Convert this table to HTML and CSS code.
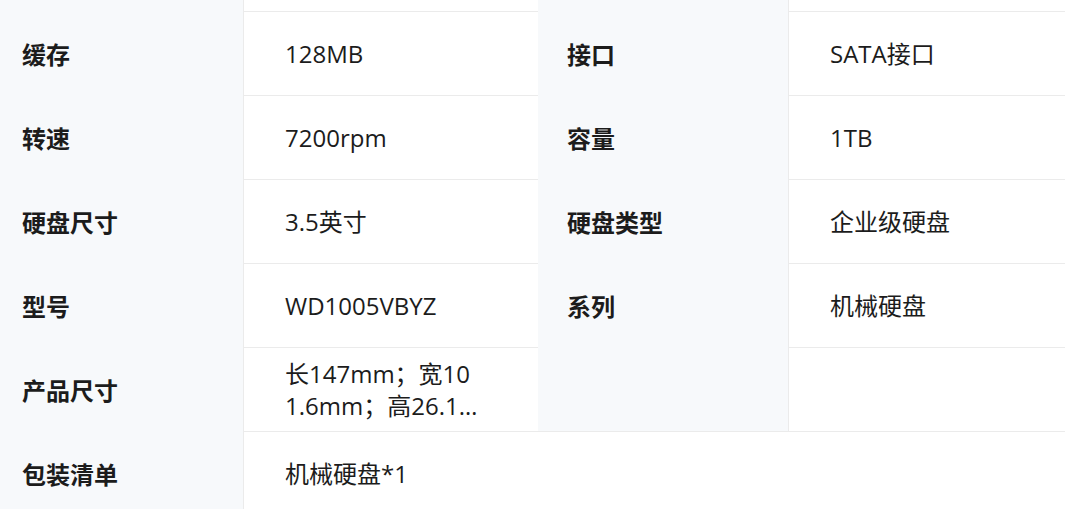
FILE: index.html
```html
<!DOCTYPE html>
<html>
<head>
    <meta charset="utf-8">
    <meta name="viewport" content="width=device-width, initial-scale=1">
    <link rel="stylesheet" href="styles.css">
</head>
<body>
    <div class="specs">
        <div class="row">
            <div class="label"></div>
            <div class="value"></div>
            <div class="label"></div>
            <div class="value"></div>
        </div>
        <div class="row">
            <div class="label">缓存</div>
            <div class="value">128MB</div>
            <div class="label">接口</div>
            <div class="value">SATA接口</div>
        </div>
        <div class="row">
            <div class="label">转速</div>
            <div class="value">7200rpm</div>
            <div class="label">容量</div>
            <div class="value">1TB</div>
        </div>
        <div class="row">
            <div class="label">硬盘尺寸</div>
            <div class="value">3.5英寸</div>
            <div class="label">硬盘类型</div>
            <div class="value">企业级硬盘</div>
        </div>
        <div class="row">
            <div class="label">型号</div>
            <div class="value">WD1005VBYZ</div>
            <div class="label">系列</div>
            <div class="value">机械硬盘</div>
        </div>
        <div class="row">
            <div class="label">产品尺寸</div>
            <div class="value"><span class="clamp">长147mm；宽101.6mm；高26.1mm</span></div>
            <div class="label"></div>
            <div class="value"></div>
        </div>
        <div class="row">
            <div class="label">包装清单</div>
            <div class="value wide">机械硬盘*1</div>
        </div>
    </div>
</body>
</html>
```

FILE: styles.css
```css
body {
    margin: 0;
    overflow: hidden;
    background-color: #fff;
    font-family: "Open Sans", "Noto Sans CJK SC", sans-serif;
    color: #1c1c1c;
}

/* page is scrolled a little: first row cut off at the top */
.specs {
    margin: -73px 0 0 -7px;
    width: 1090px;
}

.row {
    display: grid;
    grid-template-columns: 250px 295px 250px 295px;
    height: 84px;
}

.label {
    display: flex;
    align-items: center;
    padding-left: 29px;
    background-color: #f7f9fb;
    font-size: 24px;
    font-weight: bold;
}

.value {
    display: flex;
    align-items: center;
    padding: 0 42px 0 41px;
    border-top: 1px solid #ebebeb;
    border-left: 1px solid #ebebeb;
    font-size: 24px;
    line-height: 32px;
}

.value.wide {
    grid-column: span 3;
}

.clamp {
    display: -webkit-box;
    width: 194px;
    -webkit-line-clamp: 2;
    -webkit-box-orient: vertical;
    overflow: hidden;
    word-break: break-all;
}
```
